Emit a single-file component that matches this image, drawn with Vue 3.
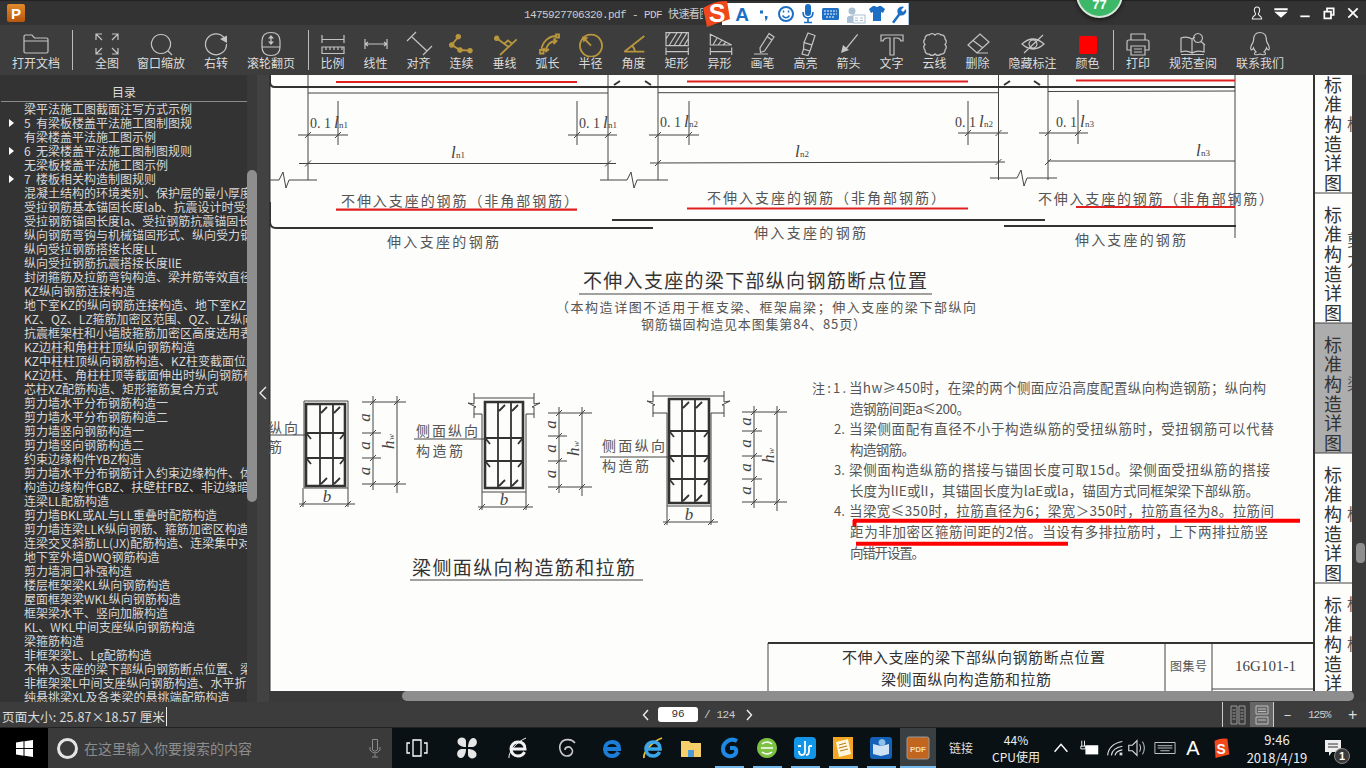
<template>
  <div class="screen">
    <!-- title bar -->
    <header class="titlebar">
      <div class="logo"><span>P</span></div>
      <div class="title">1475927706320.pdf - PDF 快速看图</div>
      <div class="win-btns">
        <svg class="win-btn" viewBox="0 0 24 24"><path d="M12 3C9 3 8 5 8 8C8 11 10 12 10 14C10 16 5 16 5 21H19C19 16 14 16 14 14C14 12 16 11 16 8C16 5 15 3 12 3Z" /></svg>
        <svg class="win-btn" viewBox="0 0 24 24"><path class="solid" d="M2 5H22V8H2ZM2 10H22L12 19Z" /></svg>
        <svg class="win-btn" viewBox="0 0 24 24"><path class="bold" d="M5 17H19" /></svg>
        <svg class="win-btn" viewBox="0 0 24 24"><path class="bold" d="M5 10H15V20H5ZM9 10V5H19V15H15" /></svg>
        <svg class="win-btn" viewBox="0 0 24 24"><path class="bold" d="M5 5L19 19M19 5L5 19" /></svg>
      </div>
    </header>

    <!-- tools -->
    <nav class="toolbar">
      <template v-for="(item, idx) in tools" :key="idx">
        <span v-if="item.sep" class="tool-sep" :class="item.sep"></span>
        <div v-else class="tool" :style="{ width: (item.w || 43) + 'px' }">
          <svg class="tool-icon" :class="{ gold: item.gold, red: item.red }" viewBox="0 0 32 26">
            <path v-if="item.d" :d="item.d" />
            <path v-if="item.fill" class="filled" :d="item.fill" />
          </svg>
          <span class="tool-label">{{ item.label }}</span>
        </div>
      </template>
    </nav>

    <div class="main">
      <!-- outline -->
      <aside class="tree">
        <div class="tree-head">目录</div>
        <div class="tree-list">
          <div v-for="row in rows" :key="row.t" class="tree-row">
            <span class="tri-slot"><i v-if="row.open" class="tri"></i></span>
            <span class="tree-text" :class="{ hot: row.hot }">{{ row.t }}</span>
          </div>
        </div>
      </aside>
      <div class="tree-scroll"><div class="tree-thumb"></div></div>
      <div class="collapse">
        <svg width="8" height="14" viewBox="0 0 8 14"><path d="M7 1L1 7L7 13" /></svg>
      </div>

      <!-- page -->
      <section class="viewer">
        <div class="viewer-top">
          <svg class="page" viewBox="269 75 1083 616" width="1083" height="616">
            <rect x="269" y="75" width="1083" height="616" fill="#fdfdfb" />
            <rect x="269" y="75" width="1.5" height="616" fill="#333" />
            <rect x="1314" y="323" width="38" height="130" fill="#adadad" />

            <path class="thin" :d="thinPath" />
            <path class="thick" :d="thickPath" />
            <path class="bars" :d="barPath" />
            <path class="inner" :d="innerPath" />
            <path class="red-thin" d="M336 82H577M687 81.5H968M1076 80.5H1235M336 209.7H577M687 208.5H968M1076 207H1235" />
            <path class="red-bold" d="M853 520.7H1300M856 543.7H1068M854.5 520V527" />

            <text v-for="s in scan" :key="s.k" class="scan" :class="s.c" :x="s.x" :y="s.y" :font-size="s.s || 14"
              :textLength="s.w" :text-anchor="s.a" :transform="s.r">{{ s.t }}</text>
            <text v-for="top in tabStarts" :key="top" class="scan dark tab-text" x="1333" :y="top - 9" font-size="18">标准构造详图</text>
          </svg>
          <div class="gutter"><div class="gutter-thumb"></div></div>
        </div>
        <div class="hscroll"><div class="hscroll-thumb"></div></div>
      </section>
    </div>

    <!-- status -->
    <footer class="status">
      <div class="status-left"><span class="page-size">页面大小: 25.87×18.57 厘米</span></div>
      <div class="pager">
        <svg width="8" height="12" viewBox="0 0 8 12"><path d="M6 1L1.5 6L6 11" /></svg>
        <span class="page-input">96</span>
        <span class="page-total">/ 124</span>
        <svg width="8" height="12" viewBox="0 0 8 12"><path d="M2 1L6.5 6L2 11" /></svg>
      </div>
      <div class="status-right">
        <div class="mode">
          <svg width="16" height="20" viewBox="0 0 16 20"><path d="M1 1H7V19H1ZM9 1H15V19H9ZM2.5 5H5.5M2.5 8H5.5M2.5 11H5.5M2.5 14H5.5M10.5 5H13.5M10.5 8H13.5M10.5 11H13.5M10.5 14H13.5" /></svg>
        </div>
        <div class="mode active">
          <svg width="14" height="20" viewBox="0 0 14 20"><path d="M1 1H13V9H1ZM1 12H13V19H1ZM3 4H11M3 6.5H11M3 15H11" /></svg>
        </div>
        <span class="zoom-minus">−</span>
        <span class="zoom-value">125%</span>
        <span class="zoom-plus">+</span>
      </div>
    </footer>

    <!-- windows taskbar -->
    <div class="taskbar">
      <div class="start">
        <svg width="17" height="17" viewBox="0 0 17 17"><path d="M0 2.4L7.5 1.3V8H0ZM8.5 1.2L17 0V8H8.5ZM0 9H7.5V15.7L0 14.6ZM8.5 9H17V17L8.5 15.8Z" /></svg>
      </div>
      <div class="search">
        <i class="cortana"></i>
        <span class="search-text">在这里输入你要搜索的内容</span>
        <svg class="search-mic" width="12" height="20" viewBox="0 0 12 20"><path d="M3.5 1.5H8.5V12Q6 14.5 3.5 12ZM1 9V12Q6 18 11 12V9M6 15.5V19M3 19H9" /></svg>
      </div>
      <div v-for="app in apps" :key="app.k" class="app" :class="{ active: app.active }" :style="{ width: app.w + 'px' }">
        <svg class="app-icon" viewBox="0 0 24 24">
          <path v-for="(p, i) in app.parts" :key="i" :d="p.d" :fill="p.f || 'none'" :stroke="p.s || 'none'" :stroke-width="p.w || 0" />
          <text v-if="app.pdf" x="12" y="16" text-anchor="middle" class="pdf-mark">PDF</text>
        </svg>
        <i class="app-bar" :class="{ on: app.open }"></i>
      </div>
      <div class="link-text">链接</div>
      <div class="cpu"><span>44%</span><span>CPU使用</span></div>
      <div v-for="t in tray" :key="t.k" class="tray" :style="{ width: t.w + 'px' }">
        <span v-if="t.text" class="tray-a">{{ t.text }}</span>
        <svg v-else class="tray-icon" viewBox="0 0 24 24">
          <path v-for="(p, i) in t.parts" :key="i" :d="p.d" :fill="p.f || 'none'" :stroke="p.s || 'none'" :stroke-width="p.w || 0" />
          <text v-if="t.sogou" x="12" y="18" text-anchor="middle" class="sogou-mini">S</text>
        </svg>
      </div>
      <div class="clock"><span>9:46</span><span>2018/4/19</span></div>
      <div class="notify">
        <svg width="18" height="18" viewBox="0 0 18 18"><path d="M1 1H17V13H8L5 17V13H1Z" fill="#eee" /><path d="M4 5H14M4 8H14" stroke="#333" /></svg>
        <span class="notify-badge">1</span>
      </div>
    </div>

    <!-- floating stuff over the title bar -->
    <div class="badge"><span>77</span></div>
    <svg class="ime" width="206" height="30" viewBox="0 0 206 30">
      <rect x="19" y="3" width="186" height="22" fill="#fff" />
      <rect x="205" y="3" width="1" height="22" fill="#aac8e8" />
      <path d="M0 8Q13 0 24 1L27 19Q15 23 4 27Z" fill="#f0471b" />
      <text x="14" y="22" class="ime-s" text-anchor="middle">S</text>
      <text x="39" y="21" class="ime-a" text-anchor="middle">A</text>
      <path d="M57 10.5h3v3h-3ZM62 16h2.5v2Q64 20.5 62 21.5Q63 19 62 18.5Z" fill="#1c6fc4" />
      <circle cx="83" cy="14" r="7" fill="none" stroke="#1c6fc4" stroke-width="2" />
      <path d="M79.5 15.5Q83 20 86.5 15.5M80.5 10.5V12.5M85.5 10.5V12.5" fill="none" stroke="#1c6fc4" stroke-width="1.5" />
      <path d="M102 7Q102 4 105 4Q108 4 108 7V13Q108 16 105 16Q102 16 102 13Z" fill="#1c6fc4" />
      <path d="M100 12Q100 18 105 18Q110 18 110 12M105 18V22M101 22.5H109" fill="none" stroke="#1c6fc4" stroke-width="1.6" />
      <rect x="119" y="8" width="17" height="12" rx="1.5" fill="#1c6fc4" />
      <path d="M121 11H134M121 14H134M123 17H132" stroke="#fff" stroke-dasharray="2 1" fill="none" />
      <circle cx="149" cy="11" r="3.5" fill="#a9bfd3" />
      <path d="M144 23V18Q144 15.5 149 15.5Q151 15.5 152 16V23Z" fill="#a9bfd3" />
      <rect x="150" y="15" width="12" height="8" fill="#fff" stroke="#a9bfd3" />
      <path d="M152 18H155M152 20.5H155M157 18H160M157 20.5H160" stroke="#a9bfd3" />
      <path d="M166 9L170 6H172Q174 8 176 6H178L182 9L180 13L178 12V21H170V12L168 13Z" fill="#1c6fc4" />
      <path d="M189 22L195 14Q193 9 197 7Q199 6 201 7L198 10L200 12L203 9Q204 12 202 14Q200 16 197 15.5L191 23.5Z" fill="#1c6fc4" />
    </svg>
  </div>
</template>

<script setup>
const tools = [
  { label: '打开文档', w: 64, d: 'M4 8V5.5Q4 4 5.5 4H12L14.5 7H26.5Q28 7 28 8.5V20.5Q28 22 26.5 22H5.5Q4 22 4 20.5ZM4 10H28' },
  { sep: 'sep-a' },
  { label: '全图', d: 'M5 9V3H11M5 3L11 9M21 3H27V9M27 3L21 9M5 17V23H11M5 23L11 17M21 23H27V17M27 23L21 17' },
  { label: '窗口缩放', w: 65, d: 'M16 3.5a9.5 9.5 0 1 0 .01 0ZM23 20L27 24' },
  { label: '右转', w: 45, d: 'M24 6.5A10.5 10.5 0 1 0 26.5 13', fill: 'M20 8L27 4.5V12Z' },
  { label: '滚轮翻页', w: 65, d: 'M16 1.5Q25 1.5 25 10V16Q25 24.5 16 24.5Q7 24.5 7 16V10Q7 1.5 16 1.5ZM7 16H25M16 6V12', fill: 'M13 7.5L16 4L19 7.5ZM13 10.5L16 14L19 10.5Z' },
  { sep: 'sep-b' },
  { label: '比例', d: 'M5 4V12M27 4V12M5 8.5H27M5 16H27V22.5H5ZM9 16V19M13 16V19M17 16V19M21 16V19M25 16V19' },
  { label: '线性', d: 'M5 8V18M27 8V18M5 13H27M8 11L5.5 13L8 15M24 11L26.5 13L24 15' },
  { label: '对齐', d: 'M4 10L13 1M20 24L29 15M9 6L24 20' },
  { label: '连续', gold: true, d: 'M12.3 5.7L5.7 14L14 19L24 19.7', fill: 'M12.3 2.9a2.8 2.8 0 1 0 .01 0ZM5.7 11.2a2.8 2.8 0 1 0 .01 0ZM14 16.2a2.8 2.8 0 1 0 .01 0ZM24 16.9a2.8 2.8 0 1 0 .01 0Z' },
  { label: '垂线', gold: true, d: 'M7.7 7.3L19.3 15.7M27.7 8.3L11 24M15.5 12.5L19 9.5L23 12.5', fill: 'M7.7 4.5a2.8 2.8 0 1 0 .01 0Z' },
  { label: '弧长', gold: true, d: 'M9.5 19A15 15 0 0 1 23.5 5M8 19H11.5V22.5H8ZM24 3.5H27V6.5H24ZM14 20A10 10 0 0 1 24 10M11.5 17L14 20.5L17 18M21.5 7.5L24.5 10L21.5 13' },
  { label: '半径', gold: true, d: 'M16 3.7a11 11 0 1 0 .01 0ZM16 14.7L9 7.5', fill: 'M7 5.5L13.5 6.5L8.5 11.5Z' },
  { label: '角度', gold: true, d: 'M6.3 20.7H26.3M6.3 20.7L26.3 5M14 14.5Q16.5 17 17 20.7' },
  { label: '矩形', d: 'M5 1.7H27.3V14.7H5ZM8 14.7L16 1.7M13 14.7L21 1.7M18 14.7L26 1.7M5 8L9 1.7M23 14.7L27 8M5 16.5V24M27.3 16.5V24M5 20.7H27.3' },
  { label: '异形', d: 'M6.3 3.3L27.7 14H6.3ZM9 14L13 7M14 14L18 9M19 14L22 11M6.3 16.5V24M27.7 16.5V24M6.3 20.7H27.7' },
  { label: '画笔', d: 'M22 2.5L27 6L17.5 20L13.5 21.5L13 17ZM20 5.5L25 9M7 23H21' },
  { label: '高亮', d: 'M18 2L25 4.5L22 14L14 11.5ZM14 11.5L22 14L20 20L13.5 18ZM13.5 18L12 23L18 24.5L20 20' },
  { label: '箭头', d: 'M24.7 3.3L12 19', fill: 'M8 22L10 14L16 19Z' },
  { label: '文字', d: 'M5 4H27V10H25Q24 7 21 7H18V24H14V7H11Q8 7 7 10H5Z' },
  { label: '云线', d: 'M10 4a4 4 0 0 1 6 0a4 4 0 0 1 6 0a3.5 3.5 0 0 1 4 4a4 4 0 0 1 0 5.5a4 4 0 0 1 0 5.5a3.5 3.5 0 0 1-4 4a4 4 0 0 1-6 0a4 4 0 0 1-6 0a3.5 3.5 0 0 1-4-4a4 4 0 0 1 0-5.5a4 4 0 0 1 0-5.5a3.5 3.5 0 0 1 4-4Z' },
  { label: '删除', d: 'M6 14L18 3L27 11L15 22ZM11 9.5L21 17M15 22H26' },
  { label: '隐藏标注', w: 67, d: 'M5 13Q16 3 27 13Q16 23 5 13ZM16 9a4 4 0 1 0 .01 0ZM26 4L7 22' },
  { label: '颜色', red: true, fill: 'M9 5H23Q25 5 25 7V21Q25 23 23 23H9Q7 23 7 21V7Q7 5 9 5Z' },
  { sep: 'sep-b' },
  { label: '打印', d: 'M9 9V3H23V9M9 19H5V11Q5 9 7 9H25Q27 9 27 11V19H23M9 15H23V24H9ZM12 18H20M12 21H20' },
  { label: '规范查阅', w: 67, d: 'M4 7Q10 5 15 8V22Q10 19 4 21ZM15 8Q17 6.5 18 6.5M15 22Q20 19 27 21V13M4 23.5H27M21 2.5a4.5 4.5 0 1 0 .01 0ZM24 10.5L28 14' },
  { label: '联系我们', w: 67, d: 'M16 1.5C11 1.5 9.5 5 9.5 9.5C9.5 11 8.5 12 7.5 14C6.5 16.5 6.5 18.5 7.5 19C8.5 19 9 18 9.5 17C10 19 11 20 12 21C10.5 21.5 10 23 11 23.5C13 24 15 23.5 16 23C17 23.5 19 24 21 23.5C22 23 21.5 21.5 20 21C21 20 22 19 22.5 17C23 18 23.5 19 24.5 19C25.5 18.5 25.5 16.5 24.5 14C23.5 12 22.5 11 22.5 9.5C22.5 5 21 1.5 16 1.5Z' }
]

const rows = [
  { t: '梁平法施工图截面注写方式示例' },
  { t: '5  有梁板楼盖平法施工图制图规', open: true },
  { t: '有梁楼盖平法施工图示例' },
  { t: '6  无梁楼盖平法施工图制图规则', open: true },
  { t: '无梁板楼盖平法施工图示例' },
  { t: '7  楼板相关构造制图规则', open: true },
  { t: '混凝土结构的环境类别、保护层的最小厚度' },
  { t: '受拉钢筋基本锚固长度lab、抗震设计时受拉' },
  { t: '受拉钢筋锚固长度la、受拉钢筋抗震锚固长度' },
  { t: '纵向钢筋弯钩与机械锚固形式、纵向受力钢筋' },
  { t: '纵向受拉钢筋搭接长度LL' },
  { t: '纵向受拉钢筋抗震搭接长度llE' },
  { t: '封闭箍筋及拉筋弯钩构造、梁并筋等效直径' },
  { t: 'KZ纵向钢筋连接构造' },
  { t: '地下室KZ的纵向钢筋连接构造、地下室KZ的' },
  { t: 'KZ、QZ、LZ箍筋加密区范围、QZ、LZ纵向钢筋' },
  { t: '抗震框架柱和小墙肢箍筋加密区高度选用表' },
  { t: 'KZ边柱和角柱柱顶纵向钢筋构造' },
  { t: 'KZ中柱柱顶纵向钢筋构造、KZ柱变截面位置' },
  { t: 'KZ边柱、角柱柱顶等截面伸出时纵向钢筋构造' },
  { t: '芯柱XZ配筋构造、矩形箍筋复合方式' },
  { t: '剪力墙水平分布钢筋构造一' },
  { t: '剪力墙水平分布钢筋构造二' },
  { t: '剪力墙竖向钢筋构造一' },
  { t: '剪力墙竖向钢筋构造二' },
  { t: '约束边缘构件YBZ构造' },
  { t: '剪力墙水平分布钢筋计入约束边缘构件、体积' },
  { t: '构造边缘构件GBZ、扶壁柱FBZ、非边缘暗柱', hot: true },
  { t: '连梁LL配筋构造' },
  { t: '剪力墙BKL或AL与LL重叠时配筋构造' },
  { t: '剪力墙连梁LLK纵向钢筋、箍筋加密区构造' },
  { t: '连梁交叉斜筋LL(JX)配筋构造、连梁集中对角' },
  { t: '地下室外墙DWQ钢筋构造' },
  { t: '剪力墙洞口补强构造' },
  { t: '楼层框架梁KL纵向钢筋构造' },
  { t: '屋面框架梁WKL纵向钢筋构造' },
  { t: '框架梁水平、竖向加腋构造' },
  { t: 'KL、WKL中间支座纵向钢筋构造' },
  { t: '梁箍筋构造' },
  { t: '非框架梁L、Lg配筋构造' },
  { t: '不伸入支座的梁下部纵向钢筋断点位置、梁' },
  { t: '非框架梁L中间支座纵向钢筋构造、水平折梁' },
  { t: '纯悬挑梁XL及各类梁的悬挑端配筋构造' }
]

// helpers for the scanned page, everything is in screen coordinates
const line = (x1, y1, x2, y2) => `M${x1} ${y1}L${x2} ${y2}`
const tick = (x, y) => line(x - 3, y + 3, x + 3, y - 3)

const thin = [
  line(308, 93, 608, 93), line(658, 92.7, 998.5, 92.7), line(1048, 91.5, 1235, 91),
  line(308, 75, 308, 180), line(608, 75, 608, 180), line(658, 75, 658, 180), line(998.5, 75, 998.5, 180), line(1048, 75, 1048, 180),
  line(1235, 75, 1235, 238),
  line(338, 101, 338, 145), line(577, 101, 577, 145), line(689, 101, 689, 145), line(968, 101, 968, 145), line(1078, 100, 1078, 144),
  line(298, 135, 348, 135), line(568, 135, 617, 135), line(649, 135, 699, 135), line(958, 133, 1008, 133), line(1039, 133, 1088, 133),
  line(299, 163.5, 616, 163.5), line(650, 163, 1005, 162), line(1048, 161, 1235, 161),
  tick(308, 135), tick(338, 135), tick(577, 135), tick(608, 135), tick(658, 135), tick(689, 135), tick(968, 133), tick(998.5, 133), tick(1048, 133), tick(1078, 133),
  tick(308, 163.5), tick(608, 163.5), tick(658, 163), tick(998.5, 162), tick(1048, 162),
  'M268 180H279L283 172L286 188L289 180H317', 'M600 180H627L631 172L634 188L637 180H668', 'M990 178H1017L1021 170L1024 186L1027 178H1057',
  'M579 294H932', 'M410 580H643'
]

const thick = [
  'M270 75V82Q270 87 275 87H1235', 'M270 202V222Q270 228 276 228H653', 'M612 220H1045', 'M1004 226H1236',
  'M614 85L620 81', 'M651 85L645 81', 'M1004 85L1010 81', 'M1040 85L1034 81'
]

const beams = [
  { l: 306, r: 345, t: 404, b: 486, ol: 304, or: 348, ot: 401, ob: 488, xs: [320, 333], ys: [433, 458], a: 373, h: 397, e1: 362, e2: 406, dy: [402, 433, 458, 484], bx: [303, 348], by: 504, bl: 327, bt: 502 },
  { l: 485, r: 523, t: 402, b: 488, ol: 482, or: 526, ot: 414, ob: 492, xs: [498, 511], ys: [438, 461], a: 559, h: 582, e1: 548, e2: 592, dy: [413, 436, 461, 487], bx: [482, 526], by: 507, bl: 504, bt: 505, fl: [468, 540, 398, 414] },
  { l: 669, r: 709, t: 399, b: 503, ol: 667, or: 711, ot: 413, ob: 506, xs: [682, 695], ys: [431, 456, 479], a: 754, h: 777, e1: 742, e2: 787, dy: [412, 431, 456, 479, 502], bx: [667, 711], by: 522, bl: 689, bt: 520, fl: [647, 730, 396, 413] }
]

const beamThin = beams.flatMap((b) => {
  const out = []
  if (b.fl) {
    const [x1, x2, y1, y2] = b.fl
    out.push(line(x1 + 6, y1, x2 - 6, y1))
    out.push(`M${x1 + 6} ${y1 - 5}V${y1 + 6}L${x1} ${y1 + 5}L${x1 + 8} ${y1 + 9}L${x1 + 6} ${y1 + 9}V${y2 + 4}`)
    out.push(`M${x2 - 6} ${y1 - 5}V${y1 + 6}L${x2} ${y1 + 5}L${x2 - 8} ${y1 + 9}L${x2 - 6} ${y1 + 9}V${y2 + 4}`)
    out.push(line(x1 + 6, y2, b.ol, y2), line(b.or, y2, x2 - 6, y2))
    out.push(`M${b.ol} ${y2}V${b.ob}H${b.or}V${y2}`)
  } else {
    out.push(`M${b.ol} ${b.ot}H${b.or}V${b.ob}H${b.ol}Z`)
  }
  const last = b.dy.length - 1
  out.push(line(b.a, b.dy[0] - 6, b.a, b.dy[last] + 6), line(b.h, b.dy[0] - 6, b.h, b.dy[last] + 9))
  b.dy.forEach((y, i) => {
    out.push(line(b.e1, y, i === 0 || i === last ? b.e2 : b.a + 8, y), tick(b.a, y))
    if (i === 0 || i === last) out.push(tick(b.h, y))
  })
  out.push(line(b.bx[0] - 4, b.by, b.bx[1] + 7, b.by), line(b.bx[0], b.ob, b.bx[0], b.by + 3), line(b.bx[1], b.ob, b.bx[1], b.by + 3))
  out.push(tick(b.bx[0], b.by), tick(b.bx[1], b.by))
  return out
})

const leaders = [line(268, 435, 306, 435), line(414, 439, 485, 439), line(600, 457, 670, 457)]

const thinPath = [...thin, ...beamThin, ...leaders, 'M768 691V643H1314', 'M1165 643V691M1212 643V691M1212 689H1314', 'M1314 193H1352M1314 323H1352M1314 453H1352M1314 583H1352'].join('')
const thickPath = [...thick, 'M1314 75V691', 'M768 643H1314'].join('')
const barPath = beams.map((b) => `M${b.l} ${b.t}H${b.r}V${b.b}H${b.l}Z`).join('')
const innerPath = beams.flatMap((b) => {
  const out = []
  b.xs.forEach((x) => {
    out.push(line(x, b.t, x, b.b))
    out.push(tick(x + 4, b.t + 6), tick(x + 4, b.b - 5))
  })
  b.ys.forEach((y) => {
    out.push(line(b.l, y, b.r, y))
    out.push(line(b.l + 1, y + 1, b.l + 5, y + 6), line(b.r - 1, y + 1, b.r - 5, y + 6))
  })
  return out
}).join('')

// all text on the scan
const scan = []
const add = (t, x, y, w, extra = {}) => scan.push({ k: scan.length, t, x, y, w, ...extra })

;[[310, 128, 'n1'], [579, 128, 'n1'], [660, 127, 'n2'], [955, 127, 'n2'], [1056, 127, 'n3']].forEach(([x, y, n]) => {
  add('0. 1', x, y, 21, { c: 'serif', s: 14 })
  add('l', x + 24, y, undefined, { c: 'serif it', s: 17 })
  add(n, x + 29, y, undefined, { c: 'serif', s: 9 })
})
;[[451, 158, 'n1'], [795, 157, 'n2'], [1196, 156, 'n3']].forEach(([x, y, n]) => {
  add('l', x, y, undefined, { c: 'serif it', s: 17 })
  add(n, x + 5, y, undefined, { c: 'serif', s: 9 })
})

add('不伸入支座的钢筋（非角部钢筋）', 341, 206, 237)
add('不伸入支座的钢筋（非角部钢筋）', 707, 203, 238)
add('不伸入支座的钢筋（非角部钢筋）', 1038, 204, 235)
add('伸入支座的钢筋', 387, 247, 112)
add('伸入支座的钢筋', 754, 238, 112)
add('伸入支座的钢筋', 1075, 245, 111)

add('不伸入支座的梁下部纵向钢筋断点位置', 583, 288, 344, { s: 19, c: 'dark' })
add('（本构造详图不适用于框支梁、框架扁梁；伸入支座的梁下部纵向', 556, 312, 420, { s: 13 })
add('钢筋锚固构造见本图集第84、85页）', 641, 329, 225, { s: 13 })
add('梁侧面纵向构造筋和拉筋', 412, 575, 223, { s: 19, c: 'dark' })

add('纵向', 268, 433, 30, { s: 14 })
add('筋', 268, 452, undefined, { s: 14 })
add('侧面纵向', 416, 436, 62, { s: 14 })
add('构造筋', 416, 456, 47, { s: 14 })
add('侧面纵向', 602, 451, 63, { s: 14 })
add('构造筋', 602, 471, 47, { s: 14 })

beams.forEach((b) => {
  b.dy.slice(1).forEach((y, i) => {
    const mid = (y + b.dy[i]) / 2
    const x = b.a - 3
    add('a', x, mid, undefined, { c: 'serif it', s: 17, a: 'middle', r: `rotate(-90 ${x} ${mid})` })
  })
  const hm = (b.dy[0] + b.dy[b.dy.length - 1]) / 2
  const hx = b.h - 3
  add('h', hx, hm + 6, undefined, { c: 'serif it', s: 17, r: `rotate(-90 ${hx} ${hm + 6})` })
  add('w', hx, hm - 3, undefined, { c: 'serif it', s: 9, r: `rotate(-90 ${hx} ${hm - 3})` })
  add('b', b.bl, b.bt, undefined, { c: 'serif it', s: 17, a: 'middle' })
})

add('注:1.', 812, 393, 34, { s: 13 })
add('2.', 834, 434, undefined, { s: 13 })
add('3.', 834, 475, undefined, { s: 13 })
add('4.', 834, 516, undefined, { s: 13 })
add('当hw≥450时，在梁的两个侧面应沿高度配置纵向构造钢筋；纵向构', 849, 393, 417, { s: 13.5 })
add('造钢筋间距a≤200。', 850, 414, 120, { s: 13.5 })
add('当梁侧面配有直径不小于构造纵筋的受扭纵筋时，受扭钢筋可以代替', 849, 434, 425, { s: 13.5 })
add('构造钢筋。', 850, 455, 65, { s: 13.5 })
add('梁侧面构造纵筋的搭接与锚固长度可取15d。梁侧面受扭纵筋的搭接', 849, 475, 421, { s: 13.5 })
add('长度为lIE或lI，其锚固长度为laE或la，锚固方式同框架梁下部纵筋。', 850, 496, 409, { s: 13.5 })
add('当梁宽≤350时，拉筋直径为6；梁宽＞350时，拉筋直径为8。拉筋间', 849, 516, 425, { s: 13.5 })
add('距为非加密区箍筋间距的2倍。当设有多排拉筋时，上下两排拉筋竖', 850, 537, 418, { s: 13.5 })
add('向错开设置。', 850, 558, 75, { s: 13.5 })

add('不伸入支座的梁下部纵向钢筋断点位置', 842, 663, 263, { s: 15, c: 'dark' })
add('梁侧面纵向构造筋和拉筋', 881, 685, 170, { s: 15, c: 'dark' })
add('图集号', 1170, 671, 37, { s: 12 })
add('16G101-1', 1235, 671, 61, { s: 15, c: 'serif' })

// vertical tabs on the right edge of the scan
const tabStarts = [85, 215, 345, 475, 605]
add('构', 1347, 130, undefined, { s: 16 })
add('剪', 1347, 246, undefined, { s: 16 })
add('力', 1347, 266, undefined, { s: 16 })
add('梁', 1347, 390, undefined, { s: 16 })
add('构', 1347, 520, undefined, { s: 16 })
add('标', 1347, 610, undefined, { s: 16 })
add('构', 1347, 650, undefined, { s: 16 })

const eShape = 'M5 13H19C19 8 16 6 12 6C8 6 5 9 5 13C5 17 8 20 12 20C15 20 17 19 18.5 16'

const apps = [
  { k: 'task', w: 49, parts: [{ d: 'M8 4H16V20H8ZM5 7H2V17H5M19 7H22V17H19', s: '#fff', w: 1.3 }] },
  { k: 'fan', w: 51, parts: [
    { d: 'M11 11C7 11 2 9 2.5 5C3 1 10 0 11 5Z', f: '#e6e6e6' }, { d: 'M13 11C13 7 15 1 19 2C23 3 23 10 18 11Z', f: '#e6e6e6' },
    { d: 'M13 13C17 13 22 15 21.5 19C21 23 14 24 13 19Z', f: '#e6e6e6' }, { d: 'M11 13C11 17 9 23 5 22C1 21 1 14 6 13Z', f: '#e6e6e6' }
  ] },
  { k: 'ie', w: 51, parts: [{ d: eShape, s: '#f2f2f2', w: 3 }, { d: 'M3 22C2 17 10 6 20 2', s: '#f2f2f2', w: 1 }] },
  { k: 'spiral', w: 47, parts: [{ d: 'M20 7C17 3 9 2 6 7C3 12 6 20 12 20C17 20 19 15 16 12C14 10 10 11 10 14', s: '#c8c8c8', w: 1.6 }] },
  { k: 'edge', w: 43, parts: [{ d: eShape, s: '#1c7dd6', w: 4 }] },
  { k: 'ie2', w: 39, parts: [{ d: 'M3 22C2 17 10 6 21 2', s: '#f2c230', w: 1.8 }, { d: eShape, s: '#3aa6e8', w: 3.6 }] },
  { k: 'folder', w: 38.5, parts: [{ d: 'M2 5H10L12 7H22V21H2Z', f: '#f6cf6a' }, { d: 'M9 14H15V21H9Z', f: '#4a9bd8' }] },
  { k: 'g', w: 38, open: true, parts: [{ d: 'M19 5C12 1 5 7 5 13C5 19 11 22 16 19C19 17 19 13 16 12H12', s: '#1e88e5', w: 4 }] },
  { k: 'green', w: 37.5, open: true, parts: [{ d: 'M12 2a10 10 0 1 0 .01 0Z', f: '#7cc142' }, { d: 'M6 12H18M7 8Q12 4 17 8M7 16Q12 20 17 16', s: '#fff', w: 1.6 }] },
  { k: 'blue', w: 38, open: true, parts: [{ d: 'M5 1H19Q23 1 23 5V19Q23 23 19 23H5Q1 23 1 19V5Q1 1 5 1Z', f: '#1296e8' }, { d: 'M12 5V15Q12 19 9 19Q6 19 6 15M8 10H5M19 10H16M16 10V15Q16 19 13 19', s: '#fff', w: 1.8 }] },
  { k: 'note', w: 38, open: true, parts: [{ d: 'M2 1H22V23H2Z', f: '#f5a623' }, { d: 'M5 6L17 3L20 18L8 21Z', f: '#fff6dc' }, { d: 'M8 9L15 7M8 12L16 10M9 15L17 13', s: '#b5761a', w: 1 }] },
  { k: 'book', w: 38, open: true, parts: [{ d: 'M4 1H20Q23 1 23 4V20Q23 23 20 23H4Q1 23 1 20V4Q1 1 4 1Z', f: '#1462b8' }, { d: 'M4 8L12 10L20 8V18L12 20L4 18Z', f: '#cfe3f5' }, { d: 'M13 3a3.5 3.5 0 1 0 .01 0Z', f: '#8fc0e8' }] },
  { k: 'pdf', w: 36, open: true, active: true, pdf: true, parts: [{ d: 'M3 1H21Q23 1 23 3V21Q23 23 21 23H3Q1 23 1 21V3Q1 1 3 1Z', f: '#c2661f', s: '#9a9a9a', w: 1 }] }
]

const tray = [
  { k: 'up', w: 30, parts: [{ d: 'M5 16L12 8L19 16', s: '#fff', w: 1.6 }] },
  { k: 'bat', w: 28, parts: [{ d: 'M7 9H21V19H7Z', f: '#fff' }, { d: 'M3 4V10M6 4V10M2 10H7V13H2Z', s: '#fff', w: 1 }] },
  { k: 'wifi', w: 22, parts: [{ d: 'M4 20Q5 8 20 5M8 20Q9 12 20 10M12 20Q13 15 20 14', s: '#ddd', w: 1.2 }, { d: 'M17 17h3v3h-3Z', f: '#ddd' }] },
  { k: 'vol', w: 22, parts: [{ d: 'M3 9H7L12 4V20L7 15H3Z', s: '#ddd', w: 1.2 }, { d: 'M15 8Q17 12 15 16M18 5Q22 12 18 19', s: '#ddd', w: 1 }] },
  { k: 'kbd', w: 34, parts: [{ d: 'M1 6H23V18H1ZM4 9.5H20M4 12H20M7 15H17', s: '#fff', w: 0.8 }] },
  { k: 'a', w: 22, text: 'A' },
  { k: 's', w: 34, sogou: true, parts: [{ d: 'M5 4Q12 1 19 2L21 19Q13 21 6 23Z', f: '#f0471b' }] }
]
</script>

<style>
html, body {
  margin: 0;
  overflow: hidden;
  background: #333;
}
</style>

<style scoped>
.screen {
  position: relative;
  display: flex;
  flex-direction: column;
  width: 1366px;
  height: 768px;
  overflow: hidden;
  font-family: "Noto Sans CJK SC", sans-serif;
  color: #ddd;
}

.titlebar {
  display: flex;
  align-items: center;
  height: 25px;
  flex: none;
  background: #333;
  border-top: 1px solid #222;
  box-sizing: border-box;
}

.logo {
  display: flex;
  align-items: center;
  justify-content: center;
  width: 18px;
  height: 18px;
  margin-left: 7px;
  border-radius: 2px;
  background: linear-gradient(#e08a2c, #b9560f);
  color: #fff;
  font: bold 15px "Liberation Sans", sans-serif;
}

.title {
  margin-left: 499px;
  width: 179px;
  overflow: hidden;
  font: 11px "Liberation Mono", "Noto Sans CJK SC", monospace;
  letter-spacing: -0.6px;
  white-space: nowrap;
  color: #ccc;
}

.win-btns {
  display: flex;
  margin-left: auto;
  margin-right: 5px;
  gap: 8px;
}

.win-btn {
  width: 16px;
  height: 16px;
  fill: none;
  stroke: #eee;
  stroke-width: 1.6;
}

.win-btn .solid {
  fill: #fff;
  stroke: none;
}

.win-btn .bold {
  stroke: #fff;
  stroke-width: 2.6;
}

.toolbar {
  display: flex;
  height: 50px;
  flex: none;
  padding-left: 4px;
  background: #3d3d3d;
}

.tool {
  display: flex;
  flex-direction: column;
  align-items: center;
  flex: none;
}

.tool-icon {
  width: 32px;
  height: 26px;
  margin-top: 6px;
  fill: none;
  stroke: #c4c4c4;
  stroke-width: 1.2;
}

.tool-icon .filled {
  stroke: none;
  fill: #c4c4c4;
}

.tool-icon.gold {
  stroke: #b8963e;
  stroke-width: 1.8;
}

.tool-icon.gold .filled {
  fill: #b8963e;
}

.tool-icon.red .filled {
  fill: #f00;
}

.tool-label {
  margin-top: -1px;
  font-size: 12px;
  line-height: 14px;
  white-space: nowrap;
  color: #dcdcdc;
}

.tool-sep {
  flex: none;
  width: 1px;
  height: 40px;
  margin-top: 5px;
  background: #bbb;
}

.sep-a {
  margin-left: 4px;
  margin-right: 12.5px;
}

.sep-b {
  margin-left: 4px;
  margin-right: 2.5px;
}

.main {
  display: flex;
  flex: none;
  height: 627px;
}

.tree {
  display: flex;
  flex-direction: column;
  width: 247px;
  flex: none;
  overflow: hidden;
  background: #333;
}

.tree-head {
  height: 26px;
  flex: none;
  margin-left: 1px;
  border-bottom: 1px solid #8a8a8a;
  font-size: 12px;
  line-height: 33px;
  text-align: center;
  color: #ddd;
}

.tree-list {
  flex: 1;
  overflow: hidden;
}

.tree-row {
  display: flex;
  height: 14px;
  align-items: center;
  font-size: 12px;
  line-height: 14px;
  color: #d8d8d8;
  white-space: pre;
}

.tri-slot {
  display: flex;
  align-items: center;
  flex: none;
  width: 12px;
  margin-left: 9px;
}

.tri {
  width: 0;
  height: 0;
  border-left: 5px solid #fff;
  border-top: 4.5px solid transparent;
  border-bottom: 4.5px solid transparent;
}

.tree-text {
  flex: 1;
  min-width: 0;
  padding-left: 3px;
  overflow: hidden;
}

.tree-text.hot {
  background: #292929;
}

.tree-scroll {
  width: 10px;
  flex: none;
  background: #3a3a3a;
}

.tree-thumb {
  height: 332px;
  margin-top: 95px;
  border-radius: 5px;
  background: #8e8e8e;
}

.collapse {
  width: 12px;
  flex: none;
  padding-top: 306px;
  box-sizing: border-box;
  text-align: center;
  background: #424242;
}

.collapse path,
.pager path {
  fill: none;
  stroke: #eee;
  stroke-width: 1.4;
}

.viewer {
  display: flex;
  flex-direction: column;
  width: 1097px;
  flex: none;
}

.viewer-top {
  display: flex;
  height: 616px;
}

.page {
  display: block;
  flex: none;
}

.gutter {
  width: 14px;
  flex: none;
  background: #3a3a3a;
}

.gutter-thumb {
  width: 9px;
  height: 20px;
  margin: 468px 0 0 4px;
  border-radius: 4px;
  background: #8e8e8e;
}

.hscroll {
  height: 11px;
  background: #3a3a3a;
}

.hscroll-thumb {
  width: 952px;
  height: 10px;
  margin-left: 133px;
  border-radius: 5px;
  background: #8e8e8e;
}

.thin {
  fill: none;
  stroke: #444;
  stroke-width: 1;
}

.thick {
  fill: none;
  stroke: #333;
  stroke-width: 2;
}

.bars {
  fill: none;
  stroke: #333;
  stroke-width: 2.6;
}

.inner {
  fill: none;
  stroke: #333;
  stroke-width: 1.8;
}

.red-thin {
  fill: none;
  stroke: #e02020;
  stroke-width: 2.2;
}

.red-bold {
  fill: none;
  stroke: #f00;
  stroke-width: 4;
}

.scan {
  font-family: "Noto Sans CJK SC", sans-serif;
  fill: #555;
}

.scan.dark {
  fill: #333;
}

.scan.serif {
  font-family: "Liberation Serif", serif;
  fill: #444;
}

.scan.it {
  font-style: italic;
}

.tab-text {
  writing-mode: vertical-rl;
  letter-spacing: 1.6px;
}

.status {
  display: flex;
  align-items: center;
  height: 26px;
  flex: none;
  box-sizing: border-box;
  background: #3c3c3c;
  border-bottom: 1px solid #222;
}

.status-left {
  width: 642px;
  flex: none;
  padding-left: 2px;
  box-sizing: border-box;
}

.page-size {
  padding-right: 1px;
  border-right: 1px solid #eee;
  font-size: 12.5px;
  letter-spacing: 0.2px;
  color: #ddd;
  white-space: nowrap;
}

.pager {
  display: flex;
  align-items: center;
  width: 580px;
  flex: none;
}

.page-input {
  width: 40px;
  height: 15px;
  margin-left: 8px;
  border-radius: 3px;
  background: #fff;
  color: #333;
  font: 11px/15px "Liberation Mono", monospace;
  text-align: center;
}

.page-total {
  width: 41px;
  margin-left: 6px;
  font: 11px "Liberation Mono", monospace;
  letter-spacing: -0.4px;
  color: #ccc;
}

.status-right {
  display: flex;
  align-items: center;
  height: 25px;
  width: 144px;
  flex: none;
  border-left: 1px solid #ccc;
  box-sizing: border-box;
}

.mode {
  display: flex;
  align-items: center;
  justify-content: center;
  height: 100%;
  width: 16px;
  margin-left: 7px;
}

.mode.active {
  width: 23px;
  margin-left: 4px;
  background: #666;
  border-right: 1px solid #ccc;
}

.mode path {
  fill: none;
  stroke: #999;
}

.mode.active path {
  stroke: #bbb;
}

.zoom-minus {
  margin-left: 10px;
  width: 12px;
  font-size: 13px;
}

.zoom-value {
  margin-left: 12px;
  width: 26px;
  font: 11px "Liberation Mono", monospace;
  letter-spacing: -1px;
  color: #ccc;
  white-space: nowrap;
}

.zoom-plus {
  margin-left: 14px;
  font: 16px "Liberation Sans", sans-serif;
}

.taskbar {
  display: flex;
  flex: 1;
  background: #0a1114;
  color: #eee;
}

.start {
  display: flex;
  align-items: center;
  justify-content: center;
  width: 48px;
  flex: none;
  background: #000;
}

.start path {
  fill: #fff;
}

.search {
  display: flex;
  align-items: center;
  width: 344px;
  flex: none;
  background: #3a3a3a;
}

.cortana {
  width: 15px;
  height: 15px;
  margin-left: 9px;
  border: 3px solid #e4e4e4;
  border-radius: 50%;
  flex: none;
}

.search-text {
  margin-left: 6px;
  font-size: 14px;
  color: #8c8c8c;
  white-space: nowrap;
}

.search-mic {
  margin-left: 117px;
}

.search-mic path {
  fill: none;
  stroke: #8c8c8c;
}

.app {
  display: flex;
  flex-direction: column;
  align-items: center;
  flex: none;
}

.app.active {
  background: #3a3f42;
}

.app-icon {
  width: 24px;
  height: 24px;
  margin-top: 8px;
  flex: none;
}

.app-bar {
  width: 29px;
  height: 2px;
  margin-top: auto;
}

.app-bar.on {
  background: #76b9ed;
}

.app.active .app-bar {
  width: 100%;
}

.pdf-mark {
  font: bold 8px "Liberation Sans", sans-serif;
  fill: #f3d9b0;
}

.link-text {
  width: 25px;
  margin-left: 13px;
  flex: none;
  font-size: 12px;
  line-height: 40px;
  color: #ddd;
}

.cpu {
  display: flex;
  flex-direction: column;
  align-items: center;
  width: 60px;
  margin-left: 12px;
  flex: none;
  padding-top: 3px;
  font-size: 12px;
  line-height: 17px;
  white-space: nowrap;
}

.tray {
  display: flex;
  align-items: center;
  justify-content: center;
  flex: none;
}

.tray-icon {
  width: 22px;
  height: 22px;
}

.tray-a {
  font: 20px "Liberation Sans", sans-serif;
  color: #fff;
}

.sogou-mini {
  font: bold 15px "Liberation Sans", sans-serif;
  fill: #fff;
}

.clock {
  display: flex;
  flex-direction: column;
  align-items: center;
  width: 78px;
  flex: none;
  padding-top: 3px;
  font-size: 13px;
  line-height: 18px;
}

.notify {
  position: relative;
  display: flex;
  align-items: center;
  justify-content: center;
  width: 34px;
  flex: none;
}

.notify-badge {
  position: absolute;
  left: 18px;
  top: 20px;
  width: 16px;
  height: 16px;
  border-radius: 50%;
  background: #3a3a3a;
  border: 1px solid #888;
  box-sizing: border-box;
  font: bold 11px/14px "Liberation Sans", sans-serif;
  text-align: center;
  color: #fff;
}

/* these two float over the title bar */
.badge {
  position: absolute;
  left: 1076px;
  top: -30px;
  display: flex;
  align-items: flex-end;
  justify-content: center;
  width: 47px;
  height: 48px;
  padding-bottom: 4px;
  box-sizing: border-box;
  border-radius: 50%;
  background: #3cb868;
  border: 2px solid #d5e6da;
  box-shadow: 0 2px 4px rgba(0, 0, 0, 0.5);
  font: bold 13px "Liberation Sans", sans-serif;
  color: #fff;
}

.ime {
  position: absolute;
  left: 703px;
  top: 0;
}

.ime-s {
  font: bold 25px "Liberation Sans", sans-serif;
  fill: #fff;
}

.ime-a {
  font: bold 19px "Liberation Sans", sans-serif;
  fill: #1c6fc4;
}
</style>
